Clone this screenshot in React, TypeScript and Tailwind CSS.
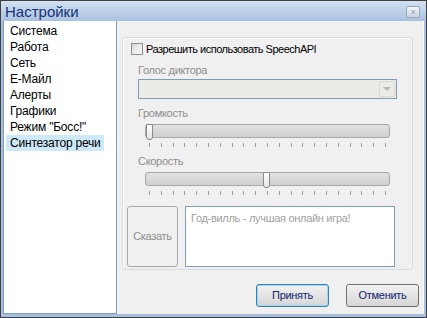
import React from 'react';

const items = ['Система', 'Работа', 'Сеть', 'E-Майл', 'Алерты', 'Графики', 'Режим "Босс!"', 'Синтезатор речи'];

function Ticks() {
  return (
    <div className="flex justify-between px-[4px] h-[4px]">
      {Array.from({ length: 21 }).map((_, i) => (
        <div key={i} className="w-px h-[4px] bg-[#9a9a9a]" />
      ))}
    </div>
  );
}

function Slider({ pos }: { pos: number }) {
  return (
    <div className="relative h-[14px] rounded-[3px] border border-[#a8a8a8] bg-gradient-to-b from-[#e2e2e2] to-[#cfcfcf]">
      <div
        className="absolute top-[-1px] w-[7px] h-[16px] rounded-b-[3px] rounded-t-[1px] border border-[#8a8a8a] bg-gradient-to-b from-white to-[#e6e6e6]"
        style={{ left: pos }}
      />
    </div>
  );
}

export default function App() {
  return (
    <div className="w-[427px] h-[318px] border border-[#404040] bg-[#a7c0df] flex flex-col font-['Liberation_Sans',Arial,sans-serif] text-[11px] tracking-[-0.3px]">
      <div className="h-[20px] flex items-center justify-between pl-[4px] pr-[6px] bg-gradient-to-b from-[#d3e1f2] to-[#a9c2e1]">
        <span className="text-[15px] tracking-normal text-[#15317a] leading-none">Настройки</span>
        <div className="w-[14px] h-[12px] mt-[2px] border border-[#9aa8b8] rounded-[2px] bg-gradient-to-b from-[#f2f5f9] to-[#c9d4e2] flex items-center justify-center text-[9px] text-[#8f9aa8] leading-none">
          ×
        </div>
      </div>
      <div className="flex-1 flex pl-[2px] pr-[2px] pb-[3px]">
        <div className="w-[114px] bg-white border-l border-b border-r border-[#7f9db9] pt-[2px] text-[12px] tracking-[-0.2px]">
          {items.map((t, i) => (
            <div key={t} className="h-[16px] pl-[2px] flex items-center">
              <span className={`px-[4px] leading-[16px] text-black whitespace-nowrap ${i === 7 ? 'bg-[#cde8f7] w-[98px]' : ''}`}>{t}</span>
            </div>
          ))}
        </div>
        <div className="flex-1 bg-[#f0f0f0] border-r border-[#fafafa] flex flex-col pl-[5px] pt-[16px]">
          <div className="w-[291px] h-[233px] rounded-[3px] border border-[#d5dce3] shadow-[inset_1px_1px_0_#ffffff] flex flex-col">
            <label className="flex items-center h-[16px] mt-[3px] ml-[8px]">
              <span className="w-[12px] h-[12px] border border-[#8d8d8d] bg-gradient-to-br from-[#dcdcdc] to-[#f8f8f8]" />
              <span className="ml-[3px] text-black whitespace-nowrap tracking-[-0.5px]">Разрешить использовать SpeechAPI</span>
            </label>
            <div className="ml-[15px] mr-[15px] flex flex-col">
              <div className="mt-[5px] h-[16px] leading-[16px] text-[#8e8e8e]">Голос диктора</div>
              <div className="mt-[1px] h-[20px] border border-[#7f9db9] bg-[#ecebe6] flex justify-end items-stretch p-[1px]">
                <div className="w-[16px] border border-[#d8d8d4] rounded-[1px] flex items-center justify-center">
                  <div className="w-0 h-0 border-l-[4px] border-r-[4px] border-t-[4px] border-l-transparent border-r-transparent border-t-[#b8b8b8]" />
                </div>
              </div>
              <div className="mt-[6px] h-[16px] leading-[16px] text-[#8e8e8e]">Громкость</div>
              <div className="mt-[3px] ml-[7px] mr-[7px]">
                <Slider pos={0} />
                <div className="mt-[5px]">
                  <Ticks />
                </div>
              </div>
              <div className="mt-[6px] h-[16px] leading-[16px] text-[#8e8e8e]">Скорость</div>
              <div className="mt-[3px] ml-[7px] mr-[7px]">
                <Slider pos={117} />
                <div className="mt-[5px]">
                  <Ticks />
                </div>
              </div>
            </div>
            <div className="flex mt-[11px] ml-[4px] gap-[7px]">
              <div className="w-[51px] h-[61px] rounded-[3px] border border-[#a9a9a9] bg-[#f0f0f0] flex items-center justify-center text-[#8e8e8e]">
                Сказать
              </div>
              <div className="w-[210px] h-[61px] bg-white border border-[#7f9db9] px-[5px] pt-[3px] text-[#a0a0a0]">
                Год-вилль - лучшая онлайн игра!
              </div>
            </div>
          </div>
          <div className="flex justify-end gap-[17px] mt-[14px] pr-[4px]">
            <button className="w-[73px] h-[23px] rounded-[3px] border border-[#3c7fb1] shadow-[inset_0_0_0_1px_#9ed8f5] bg-gradient-to-b from-[#f2f2f2] to-[#d6d6d6] text-[#12226e]">
              Принять
            </button>
            <button className="w-[73px] h-[23px] rounded-[3px] border border-[#707070] bg-gradient-to-b from-[#f2f2f2] to-[#d6d6d6] text-[#12226e]">
              Отменить
            </button>
          </div>
        </div>
      </div>
    </div>
  );
}
